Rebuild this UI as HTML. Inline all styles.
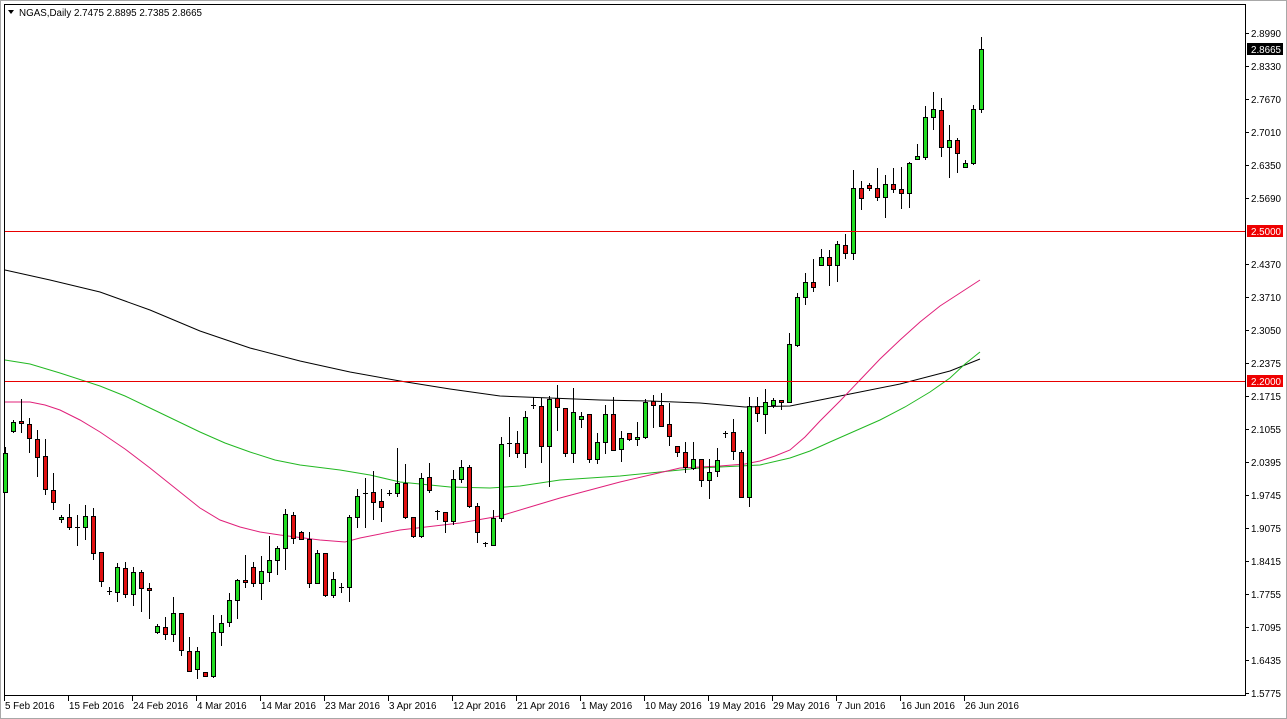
<!DOCTYPE html>
<html><head><meta charset="utf-8">
<style>
html,body{margin:0;padding:0;background:#fff;}
body{width:1287px;height:719px;overflow:hidden;position:relative;font-family:"Liberation Sans",sans-serif;}
#frame{position:absolute;left:0;top:0;width:1285px;height:717px;border:1px solid #a8a8a8;}
svg{position:absolute;left:0;top:0;}
text{font-family:"Liberation Sans",sans-serif;font-size:9.8px;}
.hl{position:absolute;left:5px;width:1240px;height:1px;background:#e80000;z-index:1;}
</style></head><body>
<div id="frame"></div>
<svg id="s" width="1287" height="719" viewBox="0 0 1287 719" xmlns="http://www.w3.org/2000/svg"></svg>
<div class="hl" style="top:231px"></div>
<div class="hl" style="top:381px"></div>
<script>
var D=[
[0,'g',453,492,447,493],[1,'g',422,431,420,433],[2,'r',421,423,399,433],[3,'r',424,438,418,453],[4,'r',439,457,430,477],
[5,'r',456,489,439,495],[6,'r',490,502,473,510],[7,'g',517,519,515,523],[8,'r',517,527,504,530],[9,'d',527,527,515,546],
[10,'g',516,527,505,540],[11,'r',516,553,508,560],[12,'r',552,581,552,587],[13,'d',591,591,587,595],[14,'g',567,592,563,602],
[15,'r',568,594,562,598],[16,'g',572,594,567,606],[17,'r',572,588,570,612],[18,'r',588,590,583,619],[19,'g',626,632,624,634],
[20,'r',627,634,617,640],[21,'g',613,634,597,642],[22,'r',613,650,613,656],[23,'r',651,671,637,672],[24,'g',651,669,647,679],
[25,'r',672,676,672,677],[26,'g',632,676,615,678],[27,'g',623,632,615,646],[28,'g',600,622,593,627],[29,'g',580,600,579,619],
[30,'r',580,582,555,588],[31,'r',567,583,562,587],[32,'g',571,583,556,600],[33,'g',560,572,536,582],[34,'g',548,560,546,575],
[35,'g',514,548,509,570],[36,'r',515,538,512,544],[37,'r',532,539,531,540],[38,'r',539,583,532,588],[39,'g',553,583,550,584],
[40,'r',553,595,553,597],[41,'g',579,595,572,598],[42,'d',587,587,583,593],[43,'g',517,587,515,602],[44,'g',496,517,489,528],
[45,'d',493,493,478,528],[46,'r',492,502,471,520],[47,'r',501,507,489,522],[48,'d',493,493,490,496],[49,'g',483,493,448,497],
[50,'r',483,517,464,519],[51,'r',517,536,517,538],[52,'g',478,536,473,538],[53,'r',477,490,463,493],[54,'d',511,511,510,520],
[55,'r',512,521,512,533],[56,'g',479,521,470,525],[57,'g',467,479,460,483],[58,'r',467,506,465,508],[59,'r',506,532,503,543],
[60,'d',543,543,542,547],[61,'g',518,545,510,546],[62,'g',444,518,437,522],[63,'d',443,443,417,457],[64,'r',443,453,431,458],
[65,'g',417,453,411,468],[66,'d',405,405,397,409],[67,'r',406,446,398,463],[68,'g',399,446,396,487],[69,'r',398,407,385,431],
[70,'r',408,453,408,457],[71,'g',412,453,388,463],[72,'g',416,419,412,428],[73,'r',414,459,414,463],[74,'g',442,459,433,464],
[75,'g',414,442,405,454],[76,'r',414,450,397,451],[77,'g',438,449,431,462],[78,'r',433,439,433,441],[79,'g',437,439,422,446],
[80,'g',402,437,399,439],[81,'r',401,405,395,428],[82,'r',405,426,393,427],[83,'r',424,436,403,446],[84,'r',446,452,446,457],
[85,'r',452,467,442,473],[86,'g',459,468,442,470],[87,'r',459,480,459,487],[88,'g',472,480,459,499],[89,'g',460,471,448,477],
[90,'d',433,433,431,438],[91,'r',432,451,419,460],[92,'r',452,497,450,497],[93,'g',406,497,397,507],[94,'r',406,413,397,422],
[95,'g',402,414,389,434],[96,'g',400,405,398,408],[97,'r',400,402,400,410],[98,'g',344,402,333,403],[99,'g',297,345,293,347],
[100,'g',282,297,273,305],[101,'r',282,287,259,292],[102,'g',257,265,249,266],[103,'r',257,265,250,286],[104,'g',244,265,241,282],
[105,'r',245,253,234,259],[106,'g',188,253,170,260],[107,'r',188,198,181,210],[108,'r',185,188,183,191],[109,'r',188,197,168,201],
[110,'g',184,197,175,218],[111,'r',184,189,168,193],[112,'r',189,193,167,209],[113,'g',163,193,162,208],[114,'g',156,159,144,160],
[115,'g',117,157,106,160],[116,'g',109,117,92,130],[117,'r',110,147,98,157],[118,'g',140,147,125,178],[119,'r',140,153,138,173],
[120,'g',163,167,160,168],[121,'g',109,163,105,165],[122,'g',49,109,37,113]
];
var s=document.getElementById('s'),h='';
function pl(pts,c){return '<polyline fill="none" style="stroke:'+c+'" stroke-width="1" points="'+pts.map(function(p){return p.join(',')}).join(' ')+'"/>';}
h+='<rect x="4.5" y="4.5" width="1241" height="691" fill="#fff" style="stroke:#000"/>';
h+=pl([[5,270],[50,280],[100,292],[150,310],[200,331],[250,348],[300,361],[350,372],[400,381],[450,389],[500,396],[550,398],[600,400],[650,401],[700,403],[745,407],[790,406],[820,400],[850,394],[900,384],[950,371],[980,359]],'#000');
h+=pl([[5,360],[30,364],[60,373],[100,386],[125,396],[150,408],[175,420],[200,432],[225,443],[250,452],[275,460],[300,465],[340,470],[370,475],[400,482],[450,487],[490,488],[520,486],[560,480],[620,476],[700,468],[760,465],[790,458],[810,451],[830,442],[855,431],[880,420],[905,407],[930,392],[950,378],[965,364],[980,352]],'#22b822');
h+=pl([[5,402],[30,402],[45,405],[60,410],[80,420],[100,432],[125,449],[150,468],[175,488],[200,508],[220,520],[240,527],[260,532],[280,535],[320,540],[345,542],[360,538],[400,530],[460,523],[500,516],[530,507],[560,498],[590,490],[620,482],[650,475],[680,468],[720,466],[745,464],[760,461],[775,456],[790,450],[805,437],[820,421],[840,401],[860,380],[880,359],[900,340],[920,322],[940,306],[960,293],[980,280]],'#e0207a');
D.forEach(function(d){
 var x=5+8*d[0];
 h+='<rect x="'+x+'" y="'+d[4]+'" width="1" height="'+(d[5]-d[4])+'" style="fill:#000"/>';
 if(d[1]=='d'){h+='<rect x="'+(x-2)+'" y="'+d[2]+'" width="5" height="1" style="fill:#000"/>';}
 else{var hh=Math.max(2,d[3]-d[2]);h+='<rect x="'+(x-1.5)+'" y="'+(d[2]+0.5)+'" width="4" height="'+hh+'" style="fill:'+(d[1]=='g'?'#22dd22':'#e01010')+';stroke:#000"/>';}
});
var L=['2.8990','2.8330','2.7670','2.7010','2.6350','2.5690','','2.4370','2.3710','2.3050','2.2375','2.1715','2.1055','2.0395','1.9745','1.9075','1.8415','1.7755','1.7095','1.6435','1.5775'];
L.forEach(function(t,k){var y=33+33*k;if(!t)return;
 h+='<rect x="1245" y="'+y+'" width="4" height="1" style="fill:#000"/>';
 h+='<text x="1251" y="'+(y+4)+'" fill="#000">'+t+'</text>';});
function box(y,c,t){h+='<rect x="1247" y="'+(y-6)+'" width="36" height="12" style="fill:'+c+'"/><text x="1251" y="'+(y+4)+'" fill="#fff">'+t+'</text>';}
box(49,'#000','2.8665');box(231,'#ee0000','2.5000');box(381,'#ee0000','2.2000');
var T=['5 Feb 2016','15 Feb 2016','24 Feb 2016','4 Mar 2016','14 Mar 2016','23 Mar 2016','3 Apr 2016','12 Apr 2016','21 Apr 2016','1 May 2016','10 May 2016','19 May 2016','29 May 2016','7 Jun 2016','16 Jun 2016','26 Jun 2016'];
T.forEach(function(t,k){var x=4+64*k;
 h+='<rect x="'+x+'" y="696" width="1" height="5" style="fill:#000"/>';
 h+='<text x="'+(x+1)+'" y="709" fill="#000">'+t+'</text>';});
h+='<polygon points="8,10 14,10 11,14" style="fill:#000"/>';
h+='<text x="19" y="16" fill="#000">NGAS,Daily  2.7475 2.8895 2.7385 2.8665</text>';
s.innerHTML=h;
</script>
</body></html>
